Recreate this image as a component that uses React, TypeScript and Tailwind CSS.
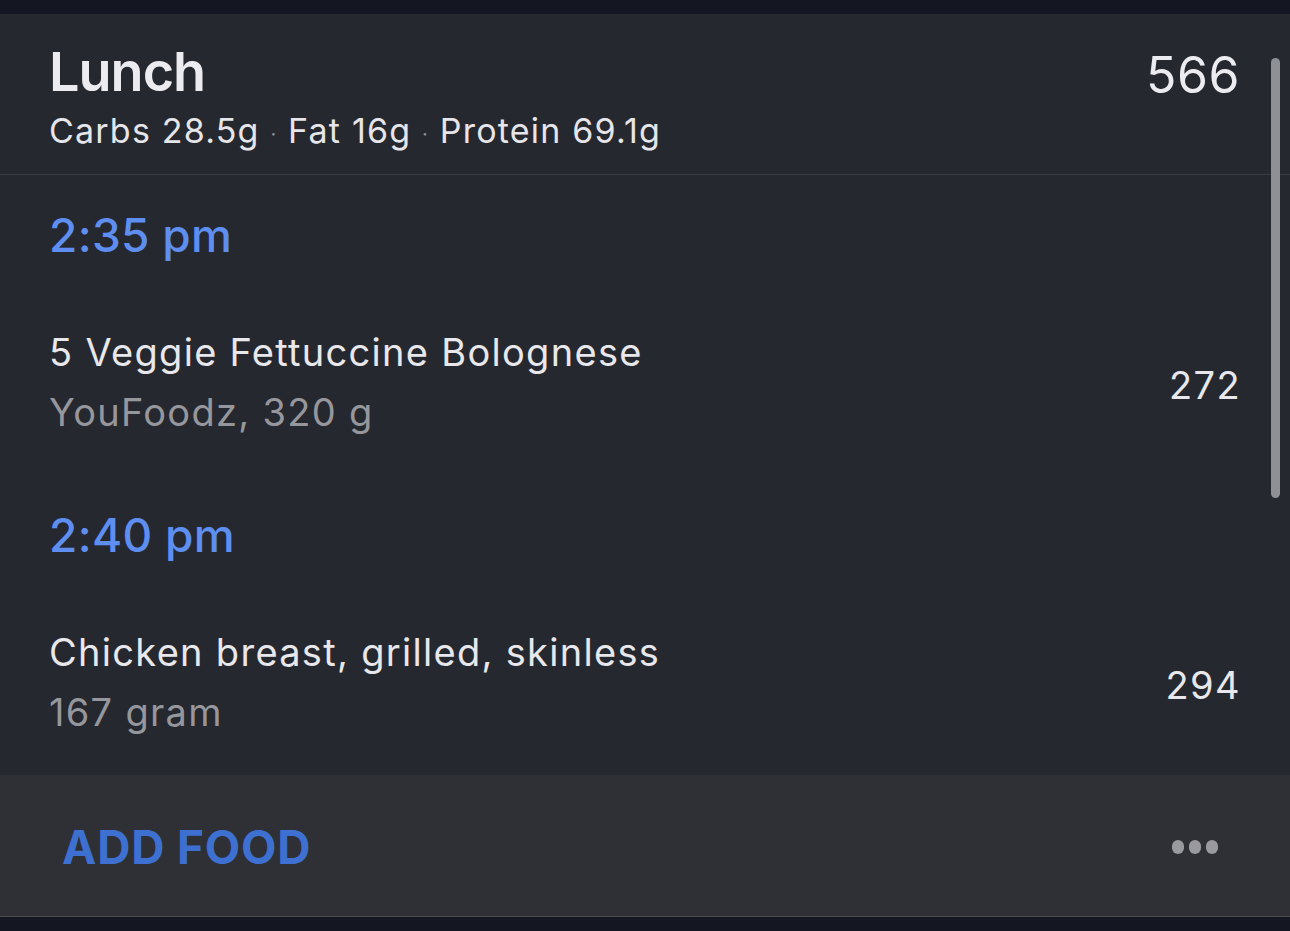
import React from 'react';

const entries = [
    { time: '2:35 pm', name: '5 Veggie Fettuccine Bolognese', detail: 'YouFoodz, 320 g', kcal: 272 },
    { time: '2:40 pm', name: 'Chicken breast, grilled, skinless', detail: '167 gram', kcal: 294 },
];

export default function App() {
    return (
        <div className="w-[1290px] h-[931px] bg-[#141621] flex flex-col overflow-hidden" style={{ fontFamily: 'Inter, "Noto Sans", sans-serif' }}>
            <div className="h-[14px] shrink-0" />

            <div className="relative flex flex-col bg-[#262830]">
                {/* Header */}
                <div className="h-[161px] flex justify-between pl-[49px] pr-[50px] border-b border-[#3a3c44]">
                    <div className="flex flex-col pt-[28px]">
                        <div className="text-[54px] leading-[60px] font-semibold text-[#ececf0] tracking-[-1px]">Lunch</div>
                        <div className="text-[34px] leading-[40px] text-[#e6e6ea] mt-[9px] tracking-[1.2px]">
                            Carbs 28.5g <span className="text-[#8a8c92] text-[20px] align-middle">·</span> Fat 16g{' '}
                            <span className="text-[#8a8c92] text-[20px] align-middle">·</span> Protein 69.1g
                        </div>
                    </div>
                    <div className="pt-[33px] text-[50px] leading-[56px] text-[#ececf0] tracking-[0.5px]">566</div>
                </div>

                {/* Entries */}
                {entries.map((e) => (
                    <div key={e.time} className="flex flex-col">
                        <div className="h-[120px] flex items-center pl-[49px] text-[46px] font-medium text-[#5e8ff0] tracking-[0.3px]">{e.time}</div>
                        <div className="h-[180px] flex items-center justify-between pl-[49px] pr-[49px]">
                            <div className="flex flex-col gap-[14px] pb-[6px]">
                                <div className="text-[38px] leading-[46px] text-[#e8e8ec] tracking-[1.3px]">{e.name}</div>
                                <div className="text-[38px] leading-[46px] text-[#96979c] tracking-[1.3px]">{e.detail}</div>
                            </div>
                            <div className="text-[38px] leading-[46px] text-[#e8e8ec] tracking-[1.4px]">{e.kcal}</div>
                        </div>
                    </div>
                ))}

                {/* scrollbar */}
                <div className="absolute right-[10px] top-[44px] w-[9px] h-[440px] rounded-full bg-[#8e9095]" />
            </div>

            {/* Footer */}
            <div className="h-[142px] shrink-0 bg-[#2e3035] border-b border-[#4a4c52] flex items-center justify-between pl-[62px] pr-[72px]">
                <div className="text-[46px] font-bold text-[#3e70d2] tracking-[0.8px] pt-[4px]">ADD FOOD</div>
                <div className="flex gap-[5px] pt-[2px]">
                    <span className="w-[12px] h-[14px] rounded-full bg-[#9a9a9e]" />
                    <span className="w-[12px] h-[14px] rounded-full bg-[#9a9a9e]" />
                    <span className="w-[12px] h-[14px] rounded-full bg-[#9a9a9e]" />
                </div>
            </div>
        </div>
    );
}
